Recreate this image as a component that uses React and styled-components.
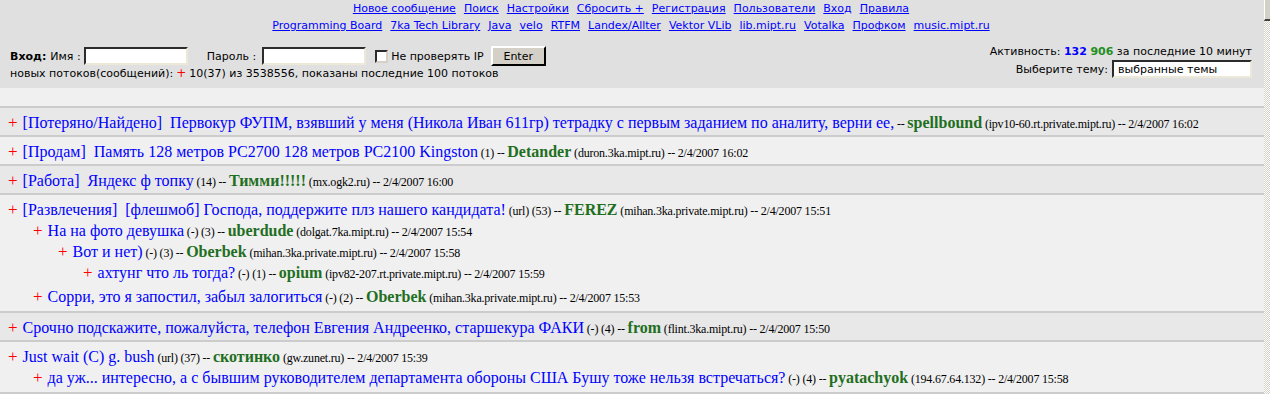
import styled, { createGlobalStyle } from 'styled-components';

const GlobalStyle = createGlobalStyle`
  body {
    margin: 0;
    background: #f0f0f0;
  }
`;

// whole window: board + the thin scrollbar on the right
const Page = styled.div`
  display: flex;
  width: 1270px;
  height: 394px;
  overflow: hidden;
`;

const Board = styled.div`
  flex: 1;
  min-width: 0;
  background: #f0f0f0;
`;

const Scrollbar = styled.div`
  width: 6px;
  background: repeating-conic-gradient(#d4d0c8 0 25%, #ffffff 0 50%) 0 0 / 2px 2px;
`;

const Thumb = styled.div`
  height: 19px;
  background: #d4d0c8;
  border-left: 1px solid #ffffff;
  border-bottom: 2px solid #404040;
`;

const Header = styled.div`
  background: #e0e0e0;
  height: 88px;
  box-sizing: border-box;
  padding: 0 12px 0 10px;
  font-family: "DejaVu Sans", Tahoma, Verdana, sans-serif;
  font-size: 11px;
  color: #000;
`;

const Nav = styled.div`
  text-align: center;
  line-height: 17px;
`;

const NavLink = styled.a`
  color: #0000ff;
  text-decoration: underline;
  margin: 0 4px;
  cursor: pointer;
`;

const Bar = styled.div`
  display: flex;
  justify-content: space-between;
  align-items: flex-start;
  margin-top: 8px;
`;

const LoginCol = styled.div`
  display: flex;
  flex-direction: column;
  padding-top: 4px;
`;

const LoginRow = styled.div`
  display: flex;
  align-items: center;
  height: 20px;
`;

const Label = styled.span`
  margin-right: ${(p) => p.$gap || 3}px;
  margin-left: ${(p) => p.$left || 0}px;
`;

const TextBox = styled.div`
  width: ${(p) => p.$w || 104}px;
  height: 18px;
  box-sizing: border-box;
  background: #fff;
  border: 2px inset #ece9d8;
  border-top-color: #808080;
  border-left-color: #808080;
  padding: 1px 4px;
  line-height: 13px;
  font-size: 11px;
`;

const Check = styled.span`
  display: inline-block;
  width: 13px;
  height: 13px;
  box-sizing: border-box;
  background: #fff;
  border: 2px inset #d4d0c8;
  border-top-color: #808080;
  border-left-color: #808080;
  margin: 0 3px 0 9px;
`;

const Button = styled.button`
  width: 55px;
  height: 20px;
  margin-left: 7px;
  padding: 0;
  background: #d4d0c8;
  border: 2px outset #ffffff;
  border-right-color: #404040;
  border-bottom-color: #404040;
  font-family: "DejaVu Sans", Tahoma, sans-serif;
  font-size: 11px;
  color: #000;
`;

const Stats = styled.div`
  line-height: 16px;
  margin-top: -1px;
`;

const Plus = styled.span`
  color: #ff0000;
  margin: 0 3px;
  font-size: 12px;
`;

const RightCol = styled.div`
  display: flex;
  flex-direction: column;
  align-items: flex-end;
  padding-top: 2px;
`;

const Activity = styled.div`
  line-height: 16px;
`;

const Num = styled.b`
  color: ${(p) => p.$color};
`;

const TopicRow = styled.div`
  display: flex;
  align-items: center;
`;

const Band = styled.div`
  height: 18px;
  border-bottom: 2px solid #cccccc;
`;

const Thread = styled.div`
  background: ${(p) => (p.$dark ? '#e8e8e8' : '#f0f0f0')};
  border-bottom: 2px solid #cccccc;
  padding: 4px 0 ${(p) => (p.$replies ? 4 : 2)}px 8px;
  font-family: "Liberation Serif", "Times New Roman", serif;
  color: #000;
`;

const Post = styled.div`
  height: 21px;
  line-height: 21px;
  white-space: nowrap;
  padding-left: ${(p) => p.$depth * 25}px;
  margin-top: ${(p) => p.$extra || 0}px;
`;

const RedPlus = styled.span`
  color: #ff0000;
  font-size: 17px;
  margin-right: 5px;
`;

const Title = styled.a`
  color: #0000ff;
  font-size: 16px;
  text-decoration: none;
`;

const Meta = styled.span`
  font-size: 12px;
  letter-spacing: -0.2px;
`;

const Author = styled.b`
  color: #1f6f1f;
  font-size: 16px;
`;

const threads = [
  {
    posts: [
      {
        depth: 0,
        cat: '[Потеряно/Найдено]',
        title: 'Первокур ФУПМ, взявший у меня (Никола Иван 611гр) тетрадку с первым заданием по аналиту, верни ее,',
        info: '',
        user: 'spellbound',
        host: 'ipv10-60.rt.private.mipt.ru',
        date: '2/4/2007 16:02',
      },
    ],
  },
  {
    posts: [
      {
        depth: 0,
        cat: '[Продам]',
        title: 'Память 128 метров PC2700 128 метров PC2100 Kingston',
        info: '(1)',
        user: 'Detander',
        host: 'duron.3ka.mipt.ru',
        date: '2/4/2007 16:02',
      },
    ],
  },
  {
    posts: [
      {
        depth: 0,
        cat: '[Работа]',
        title: 'Яндекс ф топку',
        info: '(14)',
        user: 'Тимми!!!!!',
        host: 'mx.ogk2.ru',
        date: '2/4/2007 16:00',
      },
    ],
  },
  {
    posts: [
      {
        depth: 0,
        cat: '[Развлечения]',
        title: '[флешмоб] Господа, поддержите плз нашего кандидата!',
        info: '(url) (53)',
        user: 'FEREZ',
        host: 'mihan.3ka.private.mipt.ru',
        date: '2/4/2007 15:51',
      },
      {
        depth: 1,
        title: 'На на фото девушка',
        info: '(-) (3)',
        user: 'uberdude',
        host: 'dolgat.7ka.mipt.ru',
        date: '2/4/2007 15:54',
      },
      {
        depth: 2,
        title: 'Вот и нет)',
        info: '(-) (3)',
        user: 'Oberbek',
        host: 'mihan.3ka.private.mipt.ru',
        date: '2/4/2007 15:58',
      },
      {
        depth: 3,
        title: 'ахтунг что ль тогда?',
        info: '(-) (1)',
        user: 'opium',
        host: 'ipv82-207.rt.private.mipt.ru',
        date: '2/4/2007 15:59',
      },
      {
        depth: 1,
        extra: 3,
        title: 'Сорри, это я запостил, забыл залогиться',
        info: '(-) (2)',
        user: 'Oberbek',
        host: 'mihan.3ka.private.mipt.ru',
        date: '2/4/2007 15:53',
      },
    ],
  },
  {
    posts: [
      {
        depth: 0,
        title: 'Срочно подскажите, пожалуйста, телефон Евгения Андреенко, старшекура ФАКИ',
        info: '(-) (4)',
        user: 'from',
        host: 'flint.3ka.mipt.ru',
        date: '2/4/2007 15:50',
      },
    ],
  },
  {
    posts: [
      {
        depth: 0,
        title: 'Just wait (C) g. bush',
        info: '(url) (37)',
        user: 'скотинко',
        host: 'gw.zunet.ru',
        date: '2/4/2007 15:39',
      },
      {
        depth: 1,
        title: 'да уж... интересно, а с бывшим руководителем департамента обороны США Бушу тоже нельзя встречаться?',
        info: '(-) (4)',
        user: 'pyatachyok',
        host: '194.67.64.132',
        date: '2/4/2007 15:58',
      },
    ],
  },
];

const navTop = ['Новое сообщение', 'Поиск', 'Настройки', 'Сбросить +', 'Регистрация', 'Пользователи', 'Вход', 'Правила'];
const navBottom = ['Programming Board', '7ka Tech Library', 'Java', 'velo', 'RTFM', 'Landex/Allter', 'Vektor VLib', 'lib.mipt.ru', 'Votalka', 'Профком', 'music.mipt.ru'];

const PostLine = ({ p }) => (
  <Post $depth={p.depth} $extra={p.extra}>
    <RedPlus>+</RedPlus>
    {p.cat && <Title>{p.cat}</Title>}
    {p.cat && <>&nbsp; </>}
    <Title>{p.title}</Title>
    <Meta>{p.info ? ` ${p.info} -- ` : ' -- '}</Meta>
    <Author>{p.user}</Author>
    <Meta>{` (${p.host}) -- ${p.date}`}</Meta>
  </Post>
);

export default function App() {
  return (
    <Page>
      <GlobalStyle />
      <Board>
        <Header>
          <Nav>
            <div>
              {navTop.map((n) => (
                <NavLink key={n}>{n}</NavLink>
              ))}
            </div>
            <div>
              {navBottom.map((n) => (
                <NavLink key={n}>{n}</NavLink>
              ))}
            </div>
          </Nav>
          <Bar>
            <LoginCol>
              <LoginRow>
                <b>Вход:</b>
                <Label $left={4}>Имя :</Label>
                <TextBox />
                <Label $left={19} $gap={6}>Пароль :</Label>
                <TextBox />
                <Check />
                <span>Не проверять IP</span>
                <Button>Enter</Button>
              </LoginRow>
              <Stats>
                новых потоков(сообщений):<Plus>+</Plus>10(37) из 3538556, показаны последние 100 потоков
              </Stats>
            </LoginCol>
            <RightCol>
              <Activity>
                Активность: <Num $color="#0000ff">132</Num> <Num $color="#1f8f1f">906</Num> за последние 10 минут
              </Activity>
              <TopicRow>
                <Label $gap={4}>Выберите тему:</Label>
                <TextBox $w={140}>выбранные темы</TextBox>
              </TopicRow>
            </RightCol>
          </Bar>
        </Header>
        <Band />
        {threads.map((t, i) => (
          <Thread key={i} $dark={i % 2 === 0} $replies={t.posts.length > 1}>
            {t.posts.map((p, j) => (
              <PostLine key={j} p={p} />
            ))}
          </Thread>
        ))}
      </Board>
      <Scrollbar>
        <Thumb />
      </Scrollbar>
    </Page>
  );
}
